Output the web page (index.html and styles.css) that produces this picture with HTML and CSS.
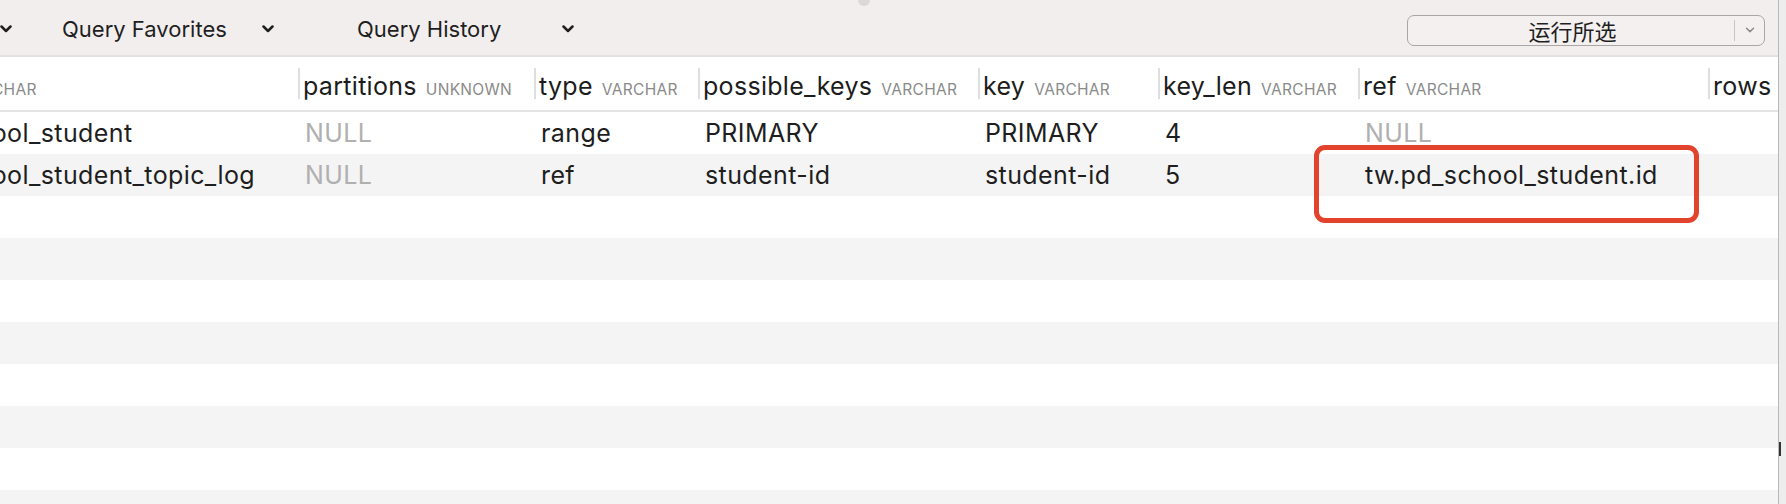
FILE: index.html
```html
<!DOCTYPE html>
<html lang="zh">
<head>
<meta charset="utf-8">
<title>Query Results</title>
<link rel="stylesheet" href="styles.css">
</head>
<body>
<div class="window">
  <div class="main">
    <div class="toolbar">
      <span class="chev chev-lead"><svg viewBox="0 0 12 8" width="12" height="8"><path d="M1.5 1.5 L6 6 L10.5 1.5" /></svg></span>
      <div class="tgroup g1">
        <span class="tlabel">Query Favorites</span>
        <span class="chev"><svg viewBox="0 0 12 8" width="12" height="8"><path d="M1.5 1.5 L6 6 L10.5 1.5" /></svg></span>
      </div>
      <div class="tgroup g2">
        <span class="tlabel">Query History</span>
        <span class="chev"><svg viewBox="0 0 12 8" width="12" height="8"><path d="M1.5 1.5 L6 6 L10.5 1.5" /></svg></span>
      </div>
      <div class="runbtn">
        <span class="runlabel">运行所选</span>
        <span class="rundiv"></span>
        <span class="runarrow"><svg viewBox="0 0 10 6" width="10" height="6"><path d="M1.5 1.2 L5 4.6 L8.5 1.2" /></svg></span>
      </div>
    </div>
    <div class="results">
      <div class="row head">
        <div class="hc c0"><span class="hn">table</span><span class="ht">VARCHAR</span></div>
        <div class="hc"><span class="hn">partitions</span><span class="ht">UNKNOWN</span></div>
        <div class="hc"><span class="hn">type</span><span class="ht">VARCHAR</span></div>
        <div class="hc"><span class="hn">possible_keys</span><span class="ht">VARCHAR</span></div>
        <div class="hc"><span class="hn">key</span><span class="ht">VARCHAR</span></div>
        <div class="hc"><span class="hn">key_len</span><span class="ht">VARCHAR</span></div>
        <div class="hc"><span class="hn">ref</span><span class="ht">VARCHAR</span></div>
        <div class="hc"><span class="hn">rows</span><span class="ht">BIGINT</span></div>
      </div>
      <div class="row">
        <div class="dc c0">pd_school_student</div>
        <div class="dc null">NULL</div>
        <div class="dc">range</div>
        <div class="dc">PRIMARY</div>
        <div class="dc">PRIMARY</div>
        <div class="dc">4</div>
        <div class="dc null">NULL</div>
        <div class="dc"></div>
      </div>
      <div class="row">
        <div class="dc c0">pd_school_student_topic_log</div>
        <div class="dc null">NULL</div>
        <div class="dc">ref</div>
        <div class="dc">student-id</div>
        <div class="dc">student-id</div>
        <div class="dc">5</div>
        <div class="dc">tw.pd_school_student.id</div>
        <div class="dc"></div>
      </div>
      <div class="row"></div>
      <div class="row"></div>
      <div class="row"></div>
      <div class="row"></div>
      <div class="row"></div>
      <div class="row"></div>
      <div class="row"></div>
      <div class="row"></div>
    </div>
    <div class="handle"></div>
    <div class="highlight"></div>
  </div>
  <div class="edge"><span class="edge-mark"></span></div>
</div>
</body>
</html>
```
FILE: styles.css
```css
html, body {
  margin: 0;
  padding: 0;
  width: 1786px;
  height: 504px;
  overflow: hidden;
  background: #ffffff;
  font-family: Inter, "Noto Sans", "Noto Sans CJK SC", sans-serif;
  color: #1f1f1f;
}

.window {
  display: flex;
  width: 1786px;
  height: 504px;
}

.main {
  position: relative;
  width: 1778px;
  height: 504px;
  overflow: hidden;
  display: flex;
  flex-direction: column;
}

.edge {
  width: 7px;
  border-left: 1px solid #b8b8b8;
  background: #ededed;
  display: flex;
  flex-direction: column;
  padding-top: 442px;
}

.edge-mark {
  width: 2px;
  height: 14px;
  background: #333333;
}

/* toolbar */
.toolbar {
  height: 52px;
  padding-top: 3px;
  flex: none;
  background: #f3eeee;
  border-bottom: 2px solid #e4e1e1;
  display: flex;
  align-items: center;
}

.chev {
  display: flex;
  align-items: center;
}

.chev svg path {
  fill: none;
  stroke: #1f1f1f;
  stroke-width: 2.5;
  stroke-linecap: round;
  stroke-linejoin: round;
}

.chev-lead {
  margin-left: 0px;
}

.tgroup {
  display: flex;
  align-items: center;
  justify-content: space-between;
}

.g1 {
  margin-left: 50px;
  width: 212px;
}

.g2 {
  margin-left: 83px;
  width: 217px;
}

.tlabel {
  font-size: 22px;
  color: #1f1f1f;
}

.runbtn {
  margin-left: auto;
  margin-right: 13px;
  margin-top: 2px;
  width: 356px;
  height: 29px;
  border: 1.5px solid #aaa6a6;
  border-radius: 7px;
  background: #f4f0f0;
  display: flex;
  align-items: center;
}

.runlabel {
  flex: 1;
  text-align: center;
  font-size: 22px;
  color: #1f1f1f;
  font-family: "Noto Sans CJK SC", sans-serif;
  line-height: 29px;
  padding-left: 3px;
}

.rundiv {
  width: 1px;
  height: 21px;
  background: #c8c4c4;
}

.runarrow {
  width: 29px;
  display: flex;
  justify-content: center;
  align-items: center;
}

.runarrow svg path {
  fill: none;
  stroke: #8e8a8a;
  stroke-width: 1.5;
  stroke-linecap: round;
  stroke-linejoin: round;
}

/* results grid */
.results {
  display: flex;
  flex-direction: column;
}

.row {
  display: grid;
  grid-template-columns: 298px 236px 164px 280px 180px 200px 350px 200px;
  height: 42px;
  flex: none;
  background: #ffffff;
}

.row:nth-child(odd) {
  background: #f4f4f4;
}

.row.head {
  height: 53px;
  background: #ffffff;
  border-bottom: 2px solid #e4e4e4;
  align-items: center;
}

.hc {
  height: 31px;
  line-height: 36px;
  border-left: 2px solid #dedede;
  padding-left: 3px;
  white-space: nowrap;
}

.hc.c0 {
  border-left: none;
  padding-left: 0;
  text-indent: -108px;
}

.hn {
  font-size: 25px;
  letter-spacing: 0.3px;
  color: #1c1c1c;
}

.ht {
  font-size: 15.5px;
  color: #8a8a8a;
  margin-left: 9px;
  letter-spacing: 0.3px;
}

.dc {
  line-height: 42px;
  font-size: 25px;
  letter-spacing: 0.4px;
  padding-left: 7px;
  white-space: nowrap;
  color: #1e1e1e;
}

.dc.c0 {
  padding-left: 0;
  text-indent: -95px;
}

.dc.null {
  color: #b0b0b0;
}

/* overlays */
.handle {
  position: absolute;
  left: 858px;
  top: -6px;
  width: 12px;
  height: 12px;
  border-radius: 50%;
  background: #dcd8d8;
}

.highlight {
  position: absolute;
  left: 1314px;
  top: 145px;
  width: 375px;
  height: 68px;
  border: 5px solid #e2432d;
  border-radius: 11px;
}
```
